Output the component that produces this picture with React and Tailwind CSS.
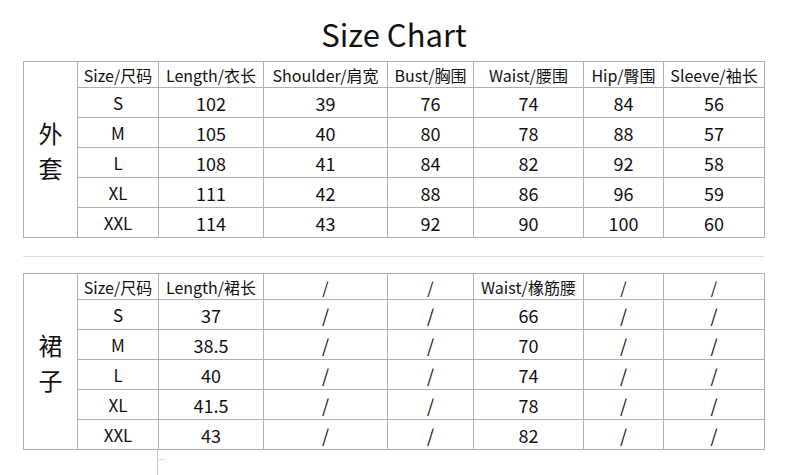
const font = { fontFamily: '"Noto Sans CJK SC", "Noto Sans", sans-serif' }

const cols = [54, 81, 105, 124, 86, 110, 80, 101]

const jacket = {
  label: ['外', '套'],
  head: ['Size/尺码', 'Length/衣长', 'Shoulder/肩宽', 'Bust/胸围', 'Waist/腰围', 'Hip/臀围', 'Sleeve/袖长'],
  rows: [
    ['S', '102', '39', '76', '74', '84', '56'],
    ['M', '105', '40', '80', '78', '88', '57'],
    ['L', '108', '41', '84', '82', '92', '58'],
    ['XL', '111', '42', '88', '86', '96', '59'],
    ['XXL', '114', '43', '92', '90', '100', '60'],
  ],
}

const skirt = {
  label: ['裙', '子'],
  head: ['Size/尺码', 'Length/裙长', '/', '/', 'Waist/橡筋腰', '/', '/'],
  rows: [
    ['S', '37', '/', '/', '66', '/', '/'],
    ['M', '38.5', '/', '/', '70', '/', '/'],
    ['L', '40', '/', '/', '74', '/', '/'],
    ['XL', '41.5', '/', '/', '78', '/', '/'],
    ['XXL', '43', '/', '/', '82', '/', '/'],
  ],
}

function SizeTable({ data }) {
  const cell = "border border-[#b0b0b0] text-center p-0 text-[#111]"
  return (
    <table className="table-fixed border-collapse w-[742px]">
      <colgroup>
        {cols.map((w, i) => <col key={i} style={{ width: w }} />)}
      </colgroup>
      <tbody>
        <tr className="h-[26px]">
          <td rowSpan={6} className={`${cell} text-[24px] leading-[35px]`}>
            {data.label.map(c => <div key={c}>{c}</div>)}
          </td>
          {data.head.map((h, i) => (
            <td key={i} className={`${cell} text-[16px] leading-[24px]`}>{h}</td>
          ))}
        </tr>
        {data.rows.map((r, i) => (
          <tr key={i} className="h-[30px]">
            {r.map((v, j) => (
              <td key={j} className={`${cell} ${j === 0 ? 'text-[17px]' : 'text-[18px]'} leading-[28px]`}>{v}</td>
            ))}
          </tr>
        ))}
      </tbody>
    </table>
  )
}

export default function App() {
  return (
    <div className="w-[790px] h-[475px] bg-white overflow-hidden" style={font}>
      <div className="h-[61px] flex justify-center items-center pt-[6px]">
        <h1 className="text-[31px] leading-none text-[#111] pr-[2px]">Size Chart</h1>
      </div>
      <div className="pl-[23px]">
        <SizeTable data={jacket} />
        <div className="mt-[18px] w-[741px] h-px bg-[#dcdcdc]" />
        <div className="mt-[16px]">
          <SizeTable data={skirt} />
        </div>
        <div className="ml-[134px] h-[26px] w-[8px] border-l border-[#c8c8c8] pt-[9px]">
          <div className="h-px w-[7px] bg-[#dcdcdc]" />
        </div>
      </div>
    </div>
  )
}
